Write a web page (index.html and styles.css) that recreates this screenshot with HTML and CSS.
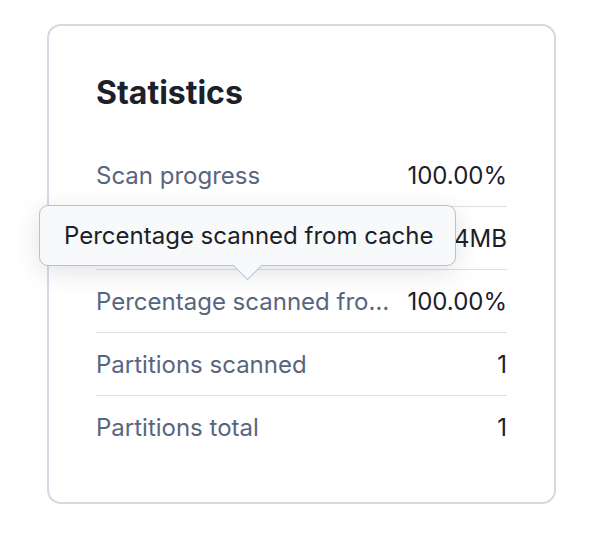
FILE: index.html
```html
<!DOCTYPE html>
<html lang="en">
<head>
<meta charset="utf-8">
<link rel="stylesheet" href="styles.css">
</head>
<body>
<div class="page">
  <section class="card">
    <h2 class="title">Statistics</h2>
    <dl class="stats">
      <div class="row"><dt>Scan progress</dt><dd>100.00%</dd></div>
      <div class="row"><dt>Bytes scanned from cache</dt><dd>1.24MB</dd></div>
      <div class="row"><dt>Percentage scanned from cache</dt><dd>100.00%</dd></div>
      <div class="row"><dt>Partitions scanned</dt><dd>1</dd></div>
      <div class="row"><dt>Partitions total</dt><dd>1</dd></div>
    </dl>
    <div class="tooltip">Percentage scanned from cache</div>
  </section>
</div>
</body>
</html>
```

FILE: styles.css
```css
html, body {
  margin: 0;
  padding: 0;
  background: #ffffff;
}
body {
  font-family: Inter, "Noto Sans", sans-serif;
}
.page {
  padding: 24px 0 0 47px;
}
.card {
  position: relative;
  box-sizing: border-box;
  width: 509px;
  height: 480px;
  border: 2px solid #d5d9e3;
  border-radius: 14px;
  padding: 47px 47px 47px 47px;
}
.title {
  margin: 0 0 31px;
  font-size: 32px;
  line-height: 40px;
  font-weight: 700;
  color: #1c2029;
}
.stats {
  margin: 0;
}
.row {
  display: flex;
  align-items: center;
  justify-content: space-between;
  gap: 18px;
  height: 62px;
  border-bottom: 1.5px solid #dcdfe6;
  font-size: 24px;
}
.row:last-child {
  border-bottom: none;
}
.row dt {
  color: #58657f;
  white-space: nowrap;
  overflow: hidden;
  text-overflow: ellipsis;
  min-width: 0;
}
.row dd {
  margin: 0;
  color: #1c2029;
  font-weight: 400;
  white-space: nowrap;
  flex-shrink: 0;
}
.tooltip {
  position: absolute;
  left: -10px;
  top: 179px;
  box-sizing: border-box;
  width: 417px;
  height: 61px;
  padding: 0 24px;
  display: flex;
  align-items: center;
  background: #f8f9fb;
  border: 1.5px solid #b9c0d2;
  border-radius: 9px;
  box-shadow: 0 6px 24px rgba(40, 50, 70, 0.14);
  font-size: 24px;
  color: #1c2029;
  white-space: nowrap;
}
.tooltip::after {
  content: "";
  position: absolute;
  left: 197px;
  bottom: -11px;
  width: 20px;
  height: 20px;
  background: #f8f9fb;
  border-right: 1.5px solid #b9c0d2;
  border-bottom: 1.5px solid #b9c0d2;
  transform: rotate(45deg);
}
```
